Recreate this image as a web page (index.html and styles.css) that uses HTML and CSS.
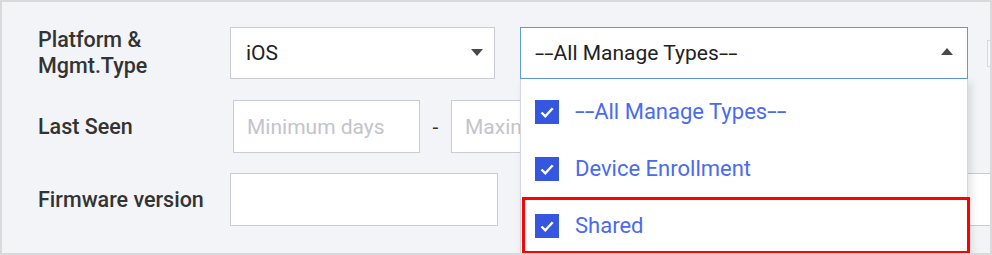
FILE: index.html
```html
<!DOCTYPE html>
<html lang="en">
<head>
    <meta charset="UTF-8">
    <title>Device Filter</title>
    <link rel="stylesheet" href="styles.css">
</head>
<body>
    <div class="frame">
        <div class="filter-row">
            <label class="filter-label">Platform &amp;<br>Mgmt.Type</label>
            <div class="select platform">
                <span class="select-value">iOS</span>
                <span class="arrow down"></span>
            </div>
            <div class="select-wrap">
                <div class="select types open">
                    <span class="select-value"><span class="hy">--</span>All Manage Types<span class="hy">--</span></span>
                    <span class="arrow up"></span>
                </div>
                <ul class="dropdown">
                    <li class="option"><span class="check"><svg viewBox="0 0 24 24"><path d="M6.5 12.5l3.8 3.8 7.4-8" /></svg></span><span class="hy">--</span>All Manage Types<span class="hy">--</span></li>
                    <li class="option"><span class="check"><svg viewBox="0 0 24 24"><path d="M6.5 12.5l3.8 3.8 7.4-8" /></svg></span>Device Enrollment</li>
                    <li class="option highlight"><span class="check"><svg viewBox="0 0 24 24"><path d="M6.5 12.5l3.8 3.8 7.4-8" /></svg></span>Shared</li>
                </ul>
            </div>
            <span class="side-box"></span>
        </div>

        <div class="filter-row">
            <label class="filter-label">Last Seen</label>
            <div class="range">
                <input type="text" class="text-input days" placeholder="Minimum days">
                <span class="dash">-</span>
                <input type="text" class="text-input days" placeholder="Maximum days">
            </div>
        </div>

        <div class="filter-row">
            <label class="filter-label">Firmware version</label>
            <input type="text" class="text-input firmware">
            <input type="text" class="text-input extra">
        </div>
    </div>
</body>
</html>
```

FILE: styles.css
```css
body { margin: 0; font-family: Roboto, "Liberation Sans", sans-serif; }
.frame {
    box-sizing: border-box;
    width: 992px; height: 255px;
    background-color: #f3f4f8;
    border: 2px solid #d9d9d9;
    padding: 25px 0 0 36px;
    overflow: hidden;
}
.filter-row { display: flex; align-items: center; margin-bottom: 21px; white-space: nowrap; }
.filter-row:nth-child(2) { margin-bottom: 20px; }
.filter-row > * { flex: none; }
.filter-label {
    width: 192px;
    font-size: 21.5px; line-height: 26px;
    font-weight: 500;
    color: #333;
}
.select {
    position: relative;
    height: 52px;
    box-sizing: border-box;
    background-color: white;
    border: 1px solid #c9ccd6;
    display: flex; align-items: center;
    padding-left: 15px;
    font-size: 21px; color: #222;
}
.select.platform { width: 265px; }
.select-wrap { position: relative; margin-left: 25px; }
.select.types { width: 448px; border-color: #5b9bd8; padding-left: 14px; }
.hy { display: inline-block; transform: scaleX(1.6); transform-origin: left center; margin-right: 7px; }
.arrow {
    position: absolute;
    width: 0; height: 0;
    border-left: 6px solid transparent;
    border-right: 6px solid transparent;
}
.arrow.down { border-top: 7px solid #4a4a4a; right: 11px; top: 21px; }
.arrow.up { border-bottom: 7px solid #4a4a4a; right: 14px; top: 20px; }
.dropdown {
    position: absolute; left: 0; top: 52px;
    width: 448px;
    box-sizing: border-box;
    margin: 0; padding: 4px 0 0 0;
    list-style: none;
    background-color: white;
    border: 1px solid #d3d6de;
    border-top: none;
    box-shadow: 3px 3px 8px rgba(0,0,0,0.12);
    z-index: 5;
}
.option {
    height: 57px;
    display: flex; align-items: center;
    padding-left: 14px;
    font-size: 22px;
    color: #4a6af0;
}
.option.highlight { box-shadow: inset 0 0 0 3px #f00; margin-left: 1px; padding-left: 13px; width: 448px; box-sizing: border-box; }
.check {
    width: 24px; height: 24px;
    background-color: #3557e0;
    margin-right: 16px;
    display: flex;
}
.check svg { width: 24px; height: 24px; fill: none; stroke: white; stroke-width: 2.4; }
.side-box {
    width: 20px; height: 25px;
    margin-left: 19px;
    border: 1px solid #d6d8e0;
    background-color: #f7f8fb;
}
.text-input {
    height: 53px;
    box-sizing: border-box;
    border: 1px solid #c9ccd6;
    background-color: white;
    padding: 0 13px;
    font-family: Roboto, "Liberation Sans", sans-serif;
    font-size: 21px;
    outline: none;
}
.text-input::placeholder { color: #c4c3cb; }
.range { display: flex; align-items: center; margin-left: 3px; }
.range > * { flex: none; }
.days { width: 187px; }
.dash { width: 31px; text-align: center; font-size: 21px; color: #333; }
.firmware { width: 268px; }
.extra { width: 480px; margin-left: 22px; }
```
